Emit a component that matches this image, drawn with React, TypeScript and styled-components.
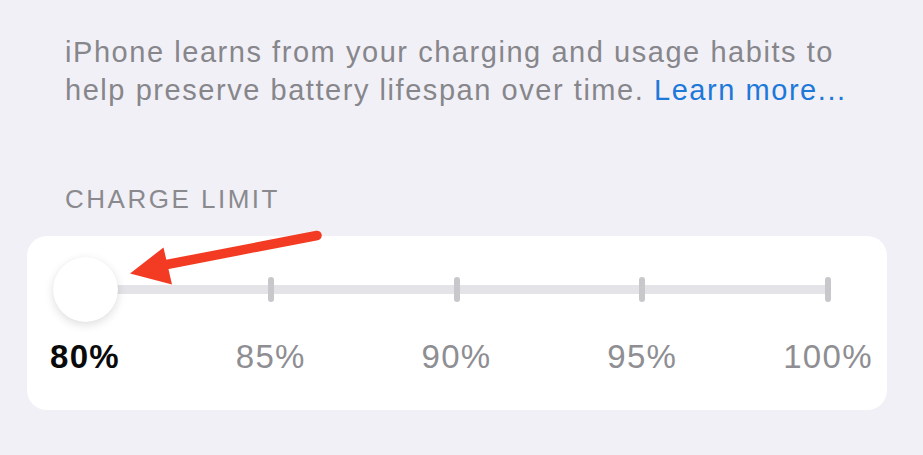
import React from "react";
import styled, { createGlobalStyle } from "styled-components";

const GlobalStyle = createGlobalStyle`
  html, body {
    margin: 0;
    padding: 0;
    background: #f1f0f6;
  }
  body {
    font-family: "Liberation Sans", Arial, sans-serif;
    -webkit-font-smoothing: antialiased;
  }
`;

const Page = styled.div`
  width: 923px;
  height: 455px;
  box-sizing: border-box;
  padding: 33px 36px 0 27px;
  display: flex;
  flex-direction: column;
  overflow: hidden;
`;

const Intro = styled.p`
  margin: 0;
  padding-left: 38px;
  max-width: 800px;
  font-size: 29px;
  line-height: 38px;
  color: #86868b;
  letter-spacing: 1.55px;
`;

const Link = styled.a`
  color: #1d78d9;
  text-decoration: none;
`;

const SectionHeader = styled.div`
  margin-top: 75px;
  padding-left: 38px;
  font-size: 26px;
  line-height: 30px;
  letter-spacing: 2.5px;
  color: #8a8a8e;
`;

const Card = styled.div`
  position: relative;
  margin-top: 22px;
  width: 860px;
  height: 174px;
  box-sizing: border-box;
  background: #ffffff;
  border-radius: 20px;
  padding: 20px 59px 0 58px;
  display: flex;
  flex-direction: column;
`;

const Track = styled.div`
  height: 66px;
  display: flex;
  justify-content: space-between;
  align-items: center;
  background: linear-gradient(#e3e3e8, #e3e3e8) center / 100% 9px no-repeat;
`;

const Stop = styled.div`
  width: 0;
  display: flex;
  justify-content: center;
  align-items: center;
`;

const Tick = styled.div`
  flex: none;
  width: 6px;
  height: 25px;
  border-radius: 3px;
  background: #c7c7cc;
`;

const Knob = styled.div`
  flex: none;
  width: 65px;
  height: 65px;
  border-radius: 50%;
  background: #ffffff;
  box-shadow: 0 3px 10px rgba(0, 0, 0, 0.13), 0 0 1px rgba(0, 0, 0, 0.06);
  position: relative;
  z-index: 1;
`;

const Labels = styled.div`
  margin-top: 15px;
  display: flex;
  justify-content: space-between;
`;

const Label = styled.div<{ $active?: boolean }>`
  width: 0;
  display: flex;
  justify-content: center;
  white-space: nowrap;
  font-size: 33px;
  line-height: 40px;
  letter-spacing: 1.3px;
  font-weight: ${(p) => (p.$active ? 700 : 400)};
  color: ${(p) => (p.$active ? "#0a0a0a" : "#8e8e93")};
`;

const Arrow = styled.svg`
  position: absolute;
  left: 100px;
  top: -10px;
  width: 200px;
  height: 65px;
  overflow: visible;
  z-index: 2;
`;

const stops = ["80%", "85%", "90%", "95%", "100%"];

export default function App() {
  return (
    <>
      <GlobalStyle />
      <Page>
        <Intro>
          iPhone learns from your charging and usage habits to help preserve
          battery lifespan over time. <Link>Learn more...</Link>
        </Intro>
        <SectionHeader>CHARGE LIMIT</SectionHeader>
        <Card>
          <Track>
            {stops.map((s, i) => (
              <Stop key={s}>{i === 0 ? <Knob /> : <Tick />}</Stop>
            ))}
          </Track>
          <Labels>
            {stops.map((s, i) => (
              <Label key={s} $active={i === 0}>
                {s}
              </Label>
            ))}
          </Labels>
          <Arrow viewBox="0 0 200 65">
            <line
              x1="32"
              y1="40"
              x2="190"
              y2="9.5"
              stroke="#f23b22"
              strokeWidth="9.5"
              strokeLinecap="round"
            />
            <polygon points="3,47.5 36.5,21.5 45,58.5" fill="#f23b22" />
          </Arrow>
        </Card>
      </Page>
    </>
  );
}
